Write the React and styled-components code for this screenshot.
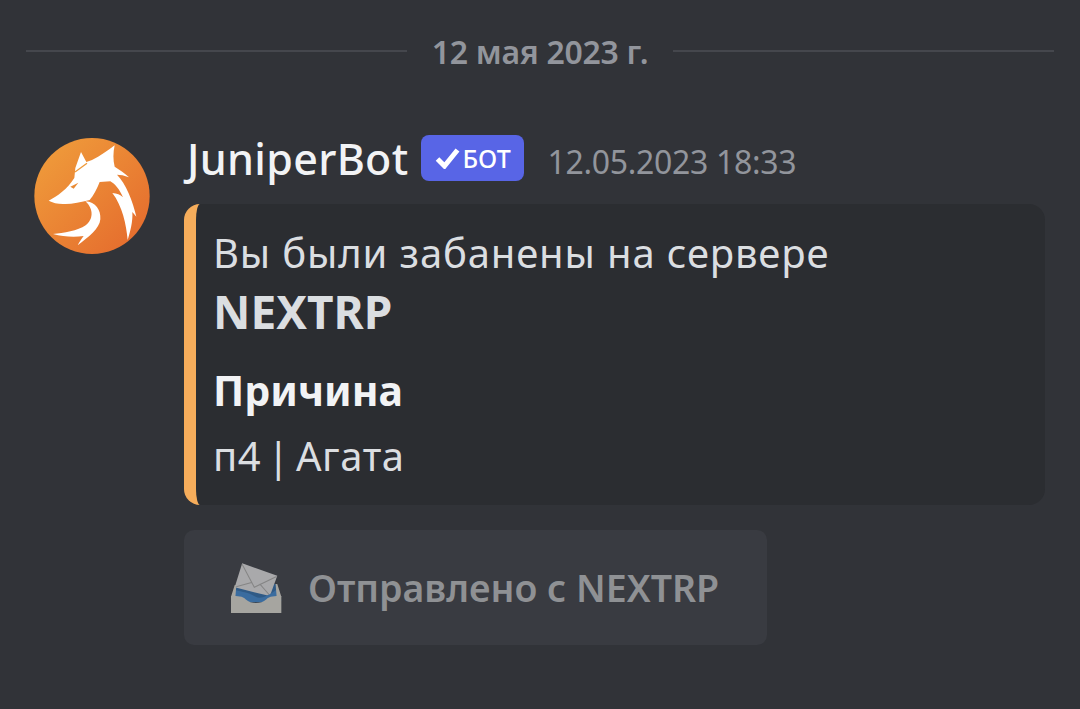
import React from "react";
import styled, { createGlobalStyle } from "styled-components";

const Global = createGlobalStyle`
  html, body { margin: 0; padding: 0; background: #313338; }
  body { font-family: "Noto Sans", "Open Sans", sans-serif; }
`;
const Page = styled.div`
  width: 1080px; height: 709px; overflow: hidden; box-sizing: border-box;
  padding: 26px 26px 0; background: #313338;
`;
const Divider = styled.div`
  display: flex; align-items: center; height: 50px; gap: 25px;
  color: #92959c; font-size: 32px; font-weight: 600; letter-spacing: -0.3px;
  &::before, &::after { content: ""; flex: 1; height: 2px; background: #45474d; }
`;
const Message = styled.div`
  display: flex; gap: 34px; margin-top: 62px; padding-left: 8px;
`;
const Avatar = styled.svg`
  width: 116px; height: 116px; flex: none; display: block;
`;
const Body = styled.div`
  flex: 1; min-width: 0; display: flex; flex-direction: column; margin-right: 9px;
`;
const Header = styled.div`
  display: flex; align-items: center; height: 46px; margin-top: -3px; padding-left: 3px;
`;
const Name = styled.span`
  color: #f2f3f5; font-size: 43px; font-weight: 500; letter-spacing: 0.3px;
`;
const Badge = styled.span`
  display: flex; align-items: center; gap: 2px; height: 46px; width: 103px; box-sizing: border-box;
  margin-left: 13px; padding-left: 14px; border-radius: 8px; background: #5865e6;
  color: #fff; font-size: 25px; font-weight: 500;
`;
const Time = styled.span`
  margin: 6px 0 0 23px; color: #92959c; font-size: 32px; letter-spacing: -0.3px;
`;
const Embed = styled.div`
  margin-top: 23px; height: 301px; box-sizing: border-box; padding: 20px 30px 0 17px;
  background: #2b2d31; border-left: 12px solid #f6ad5b; border-radius: 16px;
`;
const Title = styled.div`
  color: #dbdee1; font-size: 40px; line-height: 58px; letter-spacing: 0.85px;
`;
const Strong = styled.div`
  color: #dbdee1; font-size: 46px; font-weight: 700; line-height: 58px;
`;
const FieldName = styled.div`
  margin-top: 25px; color: #f2f3f5; font-size: 41px; font-weight: 700; line-height: 50px;
`;
const FieldValue = styled.div`
  margin-top: 12px; color: #dbdee1; font-size: 40px; line-height: 58px;
  letter-spacing: 0.6px; word-spacing: -5px;
`;
const Button = styled.div`
  display: flex; align-items: center; gap: 26px; width: 583px; height: 115px; box-sizing: border-box;
  margin-top: 25px; padding-left: 46px; border-radius: 10px; background: #393b41;
  color: #8f9194; font-size: 37.5px; font-weight: 600;
`;
const Emoji = styled.svg`
  width: 52px; height: 50px; flex: none; display: block;
`;

const Fox = () => (
  <Avatar viewBox="42 40 346 348" aria-hidden="true">
    <defs>
      <linearGradient id="fg" x1="0" y1="0" x2="1" y2="1">
        <stop offset="0" stopColor="#f0a03c" />
        <stop offset="1" stopColor="#e4672c" />
      </linearGradient>
    </defs>
    <ellipse cx="215" cy="214" rx="173" ry="174" fill="url(#fg)" />
    <path
      fill="#fff"
      d="M85 228 C112 214 140 194 162 160 L165 130 L182 82 L198 112 L215 106 C240 94 262 78 283 62 C278 84 278 106 283 126 C298 136 314 146 326 158 C312 152 300 150 290 150 C316 176 338 230 348 276 L336 262 C338 290 330 320 322 346 C318 300 306 244 276 205 C290 206 300 210 308 218 C298 195 285 178 270 170 L238 172 C230 192 220 212 208 226 C180 232 150 240 128 238 C112 238 96 234 85 228 Z"
    />
    <path
      fill="#fff"
      d="M195 230 C226 232 242 256 240 284 C238 312 204 338 172 362 C178 350 184 342 190 334 C160 338 128 336 98 328 C130 326 172 318 196 302 C218 286 222 254 195 230 Z"
    />
    <path fill="none" stroke="#ee9a3a" strokeWidth="4" d="M164 142 L200 116" />
    <path fill="#e98a34" d="M150 186 L174 174 L160 192 Z" />
  </Avatar>
);

const Inbox = () => (
  <Emoji viewBox="170 128 150 148" aria-hidden="true">
    <path fill="#2f5a86" d="M184 195 L306 190 L320 240 L171 240 Z" />
    <path fill="#a9a9ab" d="M204 129 L308 166 L286 226 L182 200 Z" />
    <path fill="none" stroke="#858585" strokeWidth="3" d="M204 132 L240 200 L306 168 M186 198 L232 186 M284 222 L256 190" />
    <path fill="#3a6c9f" d="M184 208 C204 214 226 216 244 228 C258 236 280 226 304 208 L310 244 L180 244 Z" />
    <path fill="#a6a5a0" d="M171 226 C192 226 205 226 215 236 C230 250 260 250 275 236 C285 226 300 226 320 226 L320 276 L171 276 Z" />
    <path fill="#a6a5a0" d="M171 228 L182 193 L187 193 L184 228 Z M320 228 L308 190 L303 190 L306 228 Z" />
  </Emoji>
);

const Check = () => (
  <svg width="25" height="22" viewBox="0 0 25 22" aria-hidden="true">
    <path d="M2.5 12 L9.5 19 L22.5 3" fill="none" stroke="#fff" strokeWidth="5" />
  </svg>
);

export default function App() {
  return (
    <>
      <Global />
      <Page>
        <Divider>12 мая 2023 г.</Divider>
        <Message>
          <Fox />
          <Body>
            <Header>
              <Name>JuniperBot</Name>
              <Badge><Check />БОТ</Badge>
              <Time>12.05.2023 18:33</Time>
            </Header>
            <Embed>
              <Title>Вы были забанены на сервере</Title>
              <Strong>NEXTRP</Strong>
              <FieldName>Причина</FieldName>
              <FieldValue>п4 | Агата</FieldValue>
            </Embed>
            <Button><Inbox />Отправлено с NEXTRP</Button>
          </Body>
        </Message>
      </Page>
    </>
  );
}
